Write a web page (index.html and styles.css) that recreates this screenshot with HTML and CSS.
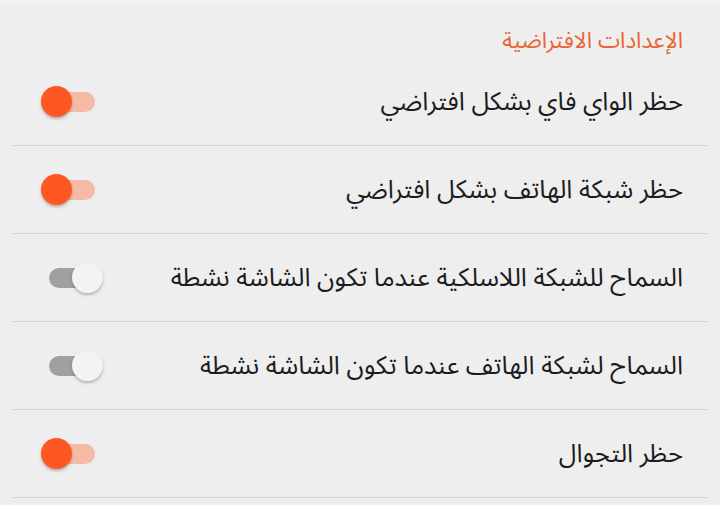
FILE: index.html
```html
<!DOCTYPE html>
<html lang="ar" dir="rtl">
<head>
    <meta charset="UTF-8">
    <meta name="viewport" content="width=device-width, initial-scale=1.0">
    <title>الإعدادات الافتراضية</title>
    <link rel="stylesheet" href="styles.css">
</head>
<body>
    <div class="status-strip"></div>

    <section class="settings">
        <h3 class="section-title">الإعدادات الافتراضية</h3>

        <ul class="pref-list">
            <li class="pref-row">
                <span class="pref-label">حظر الواي فاي بشكل افتراضي</span>
                <span class="switch on"><span class="track"></span><span class="thumb"></span></span>
            </li>
            <li class="pref-row">
                <span class="pref-label">حظر شبكة الهاتف بشكل افتراضي</span>
                <span class="switch on"><span class="track"></span><span class="thumb"></span></span>
            </li>
            <li class="pref-row">
                <span class="pref-label">السماح للشبكة اللاسلكية عندما تكون الشاشة نشطة</span>
                <span class="switch"><span class="track"></span><span class="thumb"></span></span>
            </li>
            <li class="pref-row">
                <span class="pref-label">السماح لشبكة الهاتف عندما تكون الشاشة نشطة</span>
                <span class="switch"><span class="track"></span><span class="thumb"></span></span>
            </li>
            <li class="pref-row">
                <span class="pref-label">حظر التجوال</span>
                <span class="switch on"><span class="track"></span><span class="thumb"></span></span>
            </li>
        </ul>
    </section>
</body>
</html>
```

FILE: styles.css
```css
body {
    margin: 0;
    background: #eeeeee;
    color: #1c1c1c;
    font-family: "Noto Sans Arabic", "DejaVu Sans", "Noto Sans", sans-serif;
    overflow: hidden;
}

.status-strip {
    height: 4px;
    background: #f2f2f6;
}

.settings {
    padding: 0 12px;
}

.section-title {
    box-sizing: border-box;
    margin: 0;
    height: 54px;
    padding: 20px 25px 0 0;
    display: flex;
    align-items: center;
    font-size: 22.4px;
    font-weight: normal;
    color: #ea6435;
}

.pref-list {
    list-style: none;
    margin: 0;
    padding: 0;
}

.pref-row {
    height: 87px;
    border-bottom: 1px solid #d2d2d2;
    display: flex;
    align-items: center;
    justify-content: space-between;
    padding: 0 25px 0 29px;
}

.pref-label {
    font-size: 25.5px;
}

.switch {
    position: relative;
    width: 62px;
    height: 31px;
    flex-shrink: 0;
}

.switch .track {
    position: absolute;
    left: 8px;
    top: 6px;
    width: 46px;
    height: 20px;
    border-radius: 10px;
    background: #a0a0a0;
}

.switch .thumb {
    position: absolute;
    left: 31px;
    top: 0;
    width: 31px;
    height: 31px;
    border-radius: 50%;
    background: #f3f3f3;
    box-shadow: 0 2px 3px rgba(0, 0, 0, 0.25);
}

.switch.on .track {
    background: #f5baa6;
}

.switch.on .thumb {
    left: 0;
    background: #ff5722;
}
```
